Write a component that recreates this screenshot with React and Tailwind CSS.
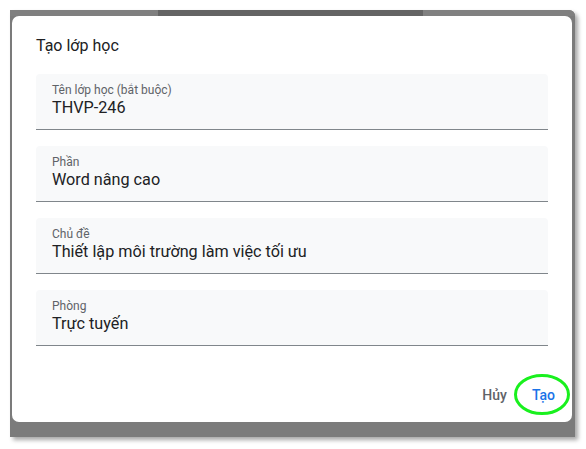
import React from 'react';

const fields = [
  { label: 'Tên lớp học (bắt buộc)', value: 'THVP-246' },
  { label: 'Phần', value: 'Word nâng cao' },
  { label: 'Chủ đề', value: 'Thiết lập môi trường làm việc tối ưu' },
  { label: 'Phòng', value: 'Trực tuyến' },
];

const Field = ({ label, value }) => (
  <div className="h-[56px] bg-[#f8f9fa] rounded-t border-b border-[#80868b] px-4 pt-2">
    <div className="text-[12px] leading-4 text-[#5f6368]">{label}</div>
    <div className="text-[16.2px] leading-5 text-[#202124]">{value}</div>
  </div>
);

const App = () => {
  return (
    <div className="min-h-screen bg-white pt-[10px] pl-[10px]" style={{ fontFamily: 'Roboto, "Noto Sans", sans-serif' }}>
      <div className="w-[565px] bg-[#7b7b7b] rounded-tr-md shadow-[3px_3px_4px_rgba(0,0,0,0.35)]">
        {/* top strip of the overlay */}
        <div className="flex h-[6px]">
          <div className="w-[148px] bg-[#7f7f7f]" />
          <div className="w-[265px] bg-[#646464]" />
          <div className="flex-1 bg-[#808080] rounded-tr-md" />
        </div>
        <div className="pl-[2px] pr-[3px] pb-[15px]">
          <div className="h-[406px] bg-white rounded-[7px] flex flex-col pt-[18px]">
            <h2 className="px-6 text-[16px] leading-6 text-[#202124]">Tạo lớp học</h2>
            <div className="px-6 mt-4 flex flex-col gap-4">
              {fields.map((f) => (
                <Field key={f.label} label={f.label} value={f.value} />
              ))}
            </div>
            <div className="mt-[31px] flex justify-end gap-[9px] pr-[9px]">
              <button type="button" className="h-9 px-2 text-[14px] leading-5 font-medium text-[#5f6368]">
                Hủy
              </button>
              <button type="button" className="relative h-9 px-2 text-[14px] leading-5 font-medium text-[#1a73e8]">
                Tạo
                <svg className="absolute left-[-10px] top-[-3px] pointer-events-none" width="56" height="41" viewBox="0 0 56 41">
                  <ellipse cx="28" cy="20.5" rx="26.5" ry="19" fill="none" stroke="#19f01e" strokeWidth="3" />
                </svg>
              </button>
            </div>
          </div>
        </div>
      </div>
    </div>
  );
};

export default App;
